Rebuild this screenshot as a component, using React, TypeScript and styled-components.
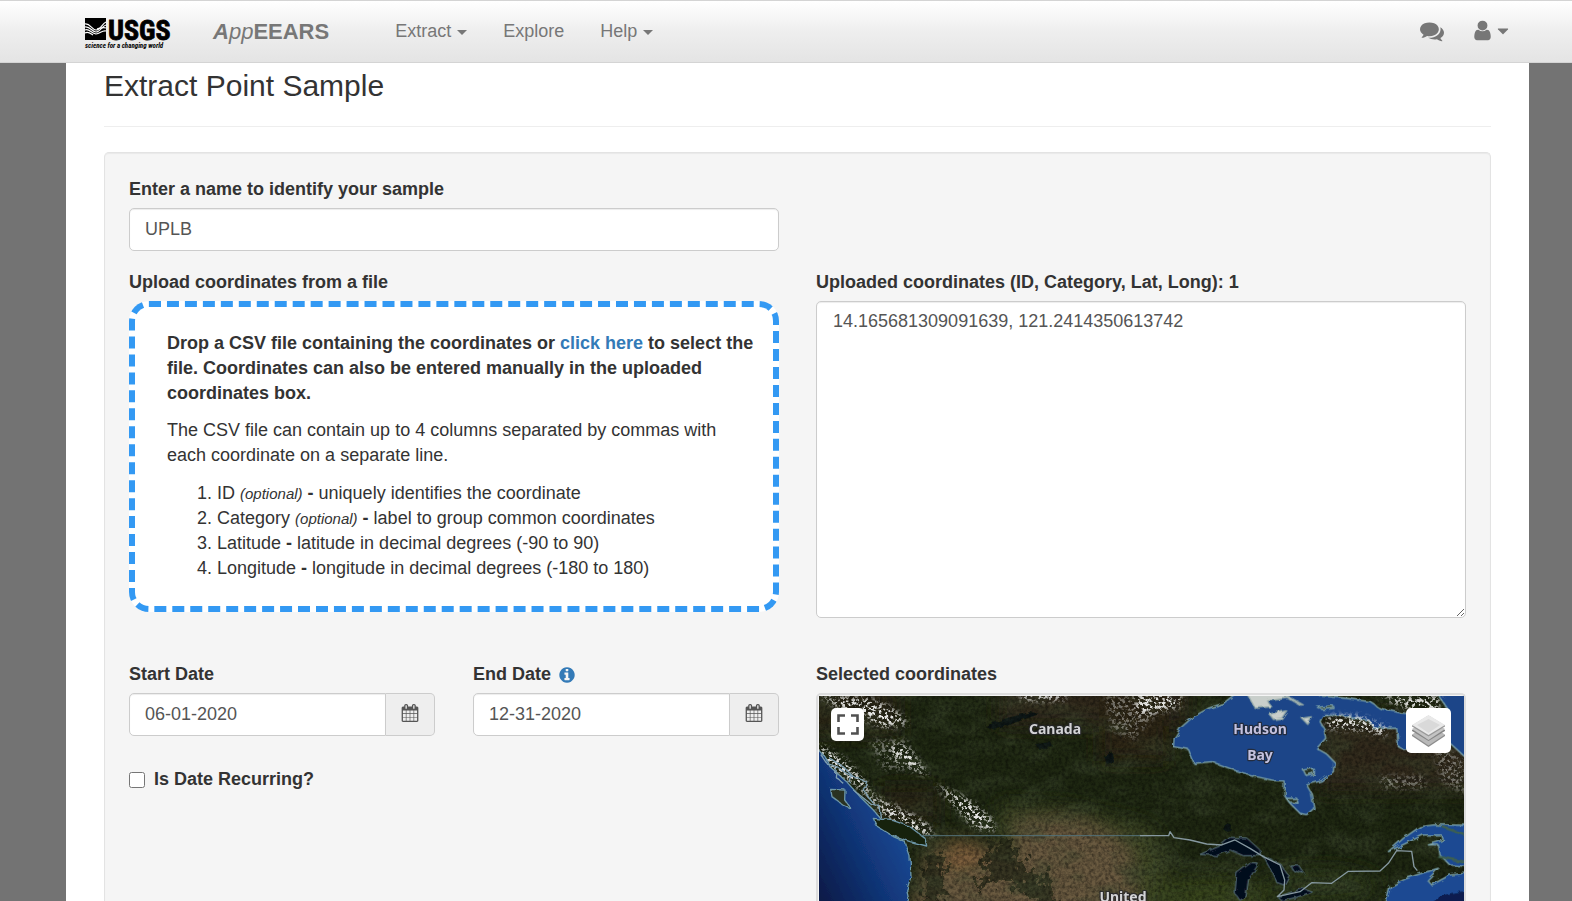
import React from "react";
import styled, { createGlobalStyle, css } from "styled-components";

const GlobalStyle = createGlobalStyle`
  *, *::before, *::after { box-sizing: border-box; }
  html { background: #737373; }
  body {
    margin: 0;
    color: #333;
    font-family: "Liberation Sans", Arial, Helvetica, sans-serif;
    font-size: 18px;
    line-height: 25px;
  }
  #root { min-height: 100vh; display: flex; flex-direction: column; }
`;

/* ---------- navigation ---------- */

const Navbar = styled.header`
  display: flex;
  align-items: center;
  height: 63px;
  padding: 0 60px 0 85px;
  border-top: 1px solid #d4d4d4;
  border-bottom: 1px solid #d4d4d4;
  background: linear-gradient(#fff, #eee 50%, #e4e4e4);
  color: #777;
`;

const LogoLink = styled.a`
  display: block;
  height: 34px;
  margin-top: 4px;
`;

const Brand = styled.a`
  margin-left: 43px;
  color: #777;
  font-size: 22px;
  font-weight: bold;
  text-decoration: none;
`;

const BrandLight = styled.em`
  font-weight: normal;
`;

const Menu = styled.nav`
  margin: 0 auto 0 66px;
`;

const NavList = styled.ul`
  display: flex;
  gap: 36px;
  margin: 0;
  padding: 0;
  list-style: none;
`;

const plainControl = css`
  display: inline-flex;
  align-items: center;
  padding: 0;
  border: 0;
  background: none;
  color: #777;
  font: inherit;
  text-decoration: none;
  cursor: pointer;
`;

const NavLink = styled.a`
  ${plainControl}
`;

const NavButton = styled.button`
  ${plainControl}
`;

const Caret = styled.span`
  margin: 2px 0 0 6px;
  border: 5px solid transparent;
  border-top-color: currentColor;
  border-bottom: 0;
`;

const NavTools = styled.div`
  display: flex;
  gap: 27px;
  padding-bottom: 2px;
`;

const Icon = styled.svg<{ $size: number }>`
  display: block;
  flex: none;
  width: ${(p) => p.$size}px;
  height: ${(p) => p.$size}px;
  fill: currentColor;
`;

/* ---------- page ---------- */

const Sheet = styled.main`
  display: flex;
  flex: 1;
  flex-direction: column;
  margin: 0 43px 0 66px;
  padding: 6px 38px 0;
  background: #fff;
`;

const Title = styled.h1`
  margin: 0 0 25px;
  padding-bottom: 24px;
  border-bottom: 1px solid #eee;
  font-size: 30px;
  font-weight: normal;
  line-height: 33px;
`;

const Well = styled.form`
  display: flex;
  flex: 1;
  flex-direction: column;
  padding: 24px 24px 0;
  border: 1px solid #e3e3e3;
  border-bottom: 0;
  border-radius: 5px 5px 0 0;
  background: #f5f5f5;
  box-shadow: inset 0 1px 1px rgba(0, 0, 0, 0.05);
`;

const Columns = styled.div<{ $gapBelow?: number; $fill?: boolean }>`
  display: grid;
  grid-template-columns: minmax(0, 1fr) minmax(0, 1fr);
  gap: 37px;
  margin-bottom: ${(p) => p.$gapBelow ?? 0}px;
  ${(p) => p.$fill && "flex: 1;"}
`;

const Field = styled.div`
  display: flex;
  flex-direction: column;
`;

const labelText = css`
  display: flex;
  align-items: center;
  margin-bottom: 6px;
  font-weight: bold;
`;

const Label = styled.label`
  ${labelText}
`;

const Caption = styled.div`
  ${labelText}
`;

const inputFrame = css`
  width: 100%;
  border: 1px solid #ccc;
  border-radius: 5px;
  background: #fff;
  box-shadow: inset 0 1px 1px rgba(0, 0, 0, 0.075);
  color: #555;
  font: inherit;
`;

const TextInput = styled.input`
  ${inputFrame}
  height: 43px;
  padding: 0 15px;
`;

const TextArea = styled.textarea`
  ${inputFrame}
  display: block;
  height: 317px;
  padding: 7px 16px;
  resize: vertical;
`;

const DropZone = styled.section`
  min-height: 311px;
  padding: 24px 17px 23px 32px;
  border: 6px dashed #3399f3;
  border-radius: 20px;
  background: #fff;
`;

const Paragraph = styled.p<{ $strong?: boolean }>`
  margin: 0 0 12px;
  font-weight: ${(p) => (p.$strong ? "bold" : "normal")};
`;

const Anchor = styled.a`
  color: #337ab7;
  text-decoration: none;
`;

const ColumnList = styled.ol`
  margin: 13px 0 0;
  padding-left: 50px;
`;

const Optional = styled.em`
  font-size: 15px;
`;

const DateSide = styled.div`
  display: flex;
  flex-direction: column;
  gap: 31px;
`;

const DateRow = styled.div`
  display: grid;
  grid-template-columns: 1fr 1fr;
  gap: 38px;
`;

const DateGroup = styled.div`
  display: flex;

  ${TextInput} {
    flex: 1;
    min-width: 0;
    border-radius: 5px 0 0 5px;
  }
`;

const CalendarButton = styled.button`
  display: grid;
  place-items: center;
  width: 49px;
  padding: 0 0 4px;
  border: 1px solid #ccc;
  border-left: 0;
  border-radius: 0 5px 5px 0;
  background: #eee;
  color: #555;
  cursor: pointer;
`;

const InfoButton = styled.button`
  ${plainControl}
  margin-left: 7px;
  color: #337ab7;
`;

const CheckLabel = styled.label`
  display: flex;
  align-items: center;
  gap: 9px;
  font-weight: bold;
`;

const CheckBox = styled.input`
  width: 16px;
  height: 16px;
  margin: 1px 0 0;
`;

/* ---------- map ---------- */

const MapFrame = styled.div`
  position: relative;
  flex: 1;
  min-height: 200px;
  border: 2px solid #ddd;
  border-bottom: 0;
  border-radius: 5px 5px 0 0;
`;

const MapCanvas = styled.svg`
  position: absolute;
  inset: 1px 0 0 1px;
  width: calc(100% - 1px);
  height: calc(100% - 1px);
`;

const MapControl = styled.button<{ $size: number; $side: "left" | "right" }>`
  position: absolute;
  top: 13px;
  ${(p) => p.$side}: 13px;
  display: grid;
  place-items: center;
  width: ${(p) => p.$size}px;
  height: ${(p) => p.$size}px;
  padding: 0;
  border: 0;
  border-radius: 5px;
  background: #fff;
  cursor: pointer;
`;

const paths = {
  comments:
    "M1408 768q0 139-94 257t-256.5 186.5-353.5 68.5q-86 0-176-16-124 88-278 128-36 9-86 16h-3q-11 0-20.5-8t-11.5-21q-1-3-1-6.5t.5-6.5 2-6l2.5-5 3.5-5.5 4-5 4.5-5 4-4.5q5-6 23-25t26-29.5 22.5-29 25-38.5 20.5-44q-124-72-195-177t-71-224q0-139 94-257t256.5-186.5 353.5-68.5 353.5 68.5 256.5 186.5 94 257zm384 256q0 120-71 224.5t-195 176.5q10 24 20.5 44t25 38.5 22.5 29 26 29.5 23 25q1 1 4 4.5t4.5 5 4 5 3.5 5.5l2.5 5 2 6 .5 6.5-1 6.5q-3 14-13 22t-22 7q-50-7-86-16-154-40-278-128-90 16-176 16-271 0-472-132 58 4 88 4 161 0 309-45t264-129q125-92 192-212t67-254q0-77-23-152 129 71 204 178t75 230z",
  user:
    "M1536 1399q0 109-62.5 187t-150.5 78h-854q-88 0-150.5-78t-62.5-187q0-85 8.5-160.5t31.5-152 58.5-131 94-89 134.5-34.5q131 128 313 128t313-128q76 0 134.5 34.5t94 89 58.5 131 31.5 152 8.5 160.5zm-256-887q0 159-112.5 271.5t-271.5 112.5-271.5-112.5-112.5-271.5 112.5-271.5 271.5-112.5 271.5 112.5 112.5 271.5z",
  caret:
    "M1408 704q0 26-19 45l-448 448q-19 19-45 19t-45-19l-448-448q-19-19-19-45t19-45 45-19h896q26 0 45 19t19 45z",
  calendar:
    "M192 1664h288v-288h-288v288zm352 0h320v-288h-320v288zm-352-352h288v-320h-288v320zm352 0h320v-320h-320v320zm-352-384h288v-288h-288v288zm736 736h320v-288h-320v288zm-384-736h320v-288h-320v288zm768 736h288v-288h-288v288zm-384-352h320v-320h-320v320zm-352-864v-288q0-13-9.5-22.5t-22.5-9.5h-64q-13 0-22.5 9.5t-9.5 22.5v288q0 13 9.5 22.5t22.5 9.5h64q13 0 22.5-9.5t9.5-22.5zm736 864h288v-320h-288v320zm-384-384h320v-288h-320v288zm384 0h288v-288h-288v288zm32-480v-288q0-13-9.5-22.5t-22.5-9.5h-64q-13 0-22.5 9.5t-9.5 22.5v288q0 13 9.5 22.5t22.5 9.5h64q13 0 22.5-9.5t9.5-22.5zm384-64v1280q0 52-38 90t-90 38h-1408q-52 0-90-38t-38-90v-1280q0-52 38-90t90-38h128v-96q0-66 47-113t113-47h64q66 0 113 47t47 113v96h384v-96q0-66 47-113t113-47h64q66 0 113 47t47 113v96h128q52 0 90 38t38 90z",
  info:
    "M1152 1376v-160q0-14-9-23t-23-9h-96v-512q0-14-9-23t-23-9h-320q-14 0-23 9t-9 23v160q0 14 9 23t23 9h96v320h-96q-14 0-23 9t-9 23v160q0 14 9 23t23 9h448q14 0 23-9t9-23zm-128-896v-160q0-14-9-23t-23-9h-192q-14 0-23 9t-9 23v160q0 14 9 23t23 9h192q14 0 23-9t9-23zm640 416q0 209-103 385.5t-279.5 279.5-385.5 103-385.5-103-279.5-279.5-103-385.5 103-385.5 279.5-279.5 385.5-103 385.5 103 279.5 279.5 103 385.5z",
};

function Glyph({ name, size }: { name: keyof typeof paths; size: number }) {
  return (
    <Icon $size={size} viewBox="0 0 1792 1792" aria-hidden="true">
      <path d={paths[name]} />
    </Icon>
  );
}

function UsgsLogo() {
  return (
    <svg width="85" height="34" viewBox="0 0 85 34" overflow="visible" role="img" aria-label="USGS">
      <rect x="0" y="1" width="21" height="22" />
      <g fill="none" stroke="#fff" strokeWidth="1.2">
        <path d="M0 7c5-1 7 6 11 6s6-6 10-8" />
        <path d="M0 10c5-1 7 5 11 5s6-6 10-7" />
        <path d="M12 12c4-1 6-2 9-1" />
        <path d="M0 13c4-2 6 3 11 4 4 0 6-4 10-3" />
        <path d="M0 16c3-2 5 0 8 2" />
      </g>
      <text
        x="23"
        y="23"
        fontFamily="'Roboto Condensed', 'Open Sans Condensed', 'Liberation Sans', sans-serif"
        fontWeight="bold"
        fontSize="28"
        stroke="#000"
        strokeWidth="0.8"
      >
        USGS
      </text>
      <text
        x="0"
        y="31"
        fontFamily="'Roboto Condensed', 'Open Sans Condensed', 'Liberation Sans', sans-serif"
        fontWeight="bold"
        fontStyle="italic"
        fontSize="7"
      >
        science for a changing world
      </text>
    </svg>
  );
}

/* West and east tiles share one 645-unit-wide view; each is drawn at three units per pixel. */
const WEST = "translate(-9 -106) scale(.33333)";
const EAST = "translate(321 -106) scale(.33333)";

const HUDSON =
  "M300 300L250 340 205 355 160 380 120 415 102 445 100 470 145 478 162 520 215 515 290 543 350 560 405 572 432 573 432 615 450 640 480 670 500 674 522 655 514 610 500 585 545 572 580 545 582 515 560 492 530 475 557 445 552 415 540 395 548 378 600 375 690 395 700 415 770 415 775 470 790 478 925 455 990 515 990 300 885 300 925 360 880 380 780 368 720 355 690 335 620 325 540 318 530 300Z";

function SatelliteMap() {
  return (
    <MapCanvas viewBox="0 0 645 205" preserveAspectRatio="xMidYMin slice" role="img" aria-label="Satellite map of North America">
      <defs>
        <filter id="grain" x="0" y="0" width="100%" height="100%">
          <feTurbulence type="fractalNoise" baseFrequency="0.3" numOctaves="4" seed="4" />
          <feColorMatrix values="0 0 0 0 0  0 0 0 0 0  0 0 0 0 0  1.8 1.2 0 0 -1.15" />
        </filter>
        <filter id="mottle" x="0" y="0" width="100%" height="100%">
          <feTurbulence type="fractalNoise" baseFrequency="0.03 0.05" numOctaves="5" seed="11" />
          <feColorMatrix values="0 0 0 0 .05  0 0 0 0 .07  0 0 0 0 .03  3 0 0 0 -1.3" />
        </filter>
        <filter id="snow" x="-10%" y="-10%" width="120%" height="120%">
          <feGaussianBlur in="SourceAlpha" stdDeviation="3" result="area" />
          <feTurbulence type="fractalNoise" baseFrequency="0.3" numOctaves="3" seed="7" />
          <feColorMatrix values="0 0 0 0 .8  0 0 0 0 .8  0 0 0 0 .78  7 0 0 0 -3.4" />
          <feComposite in2="area" operator="in" />
        </filter>
        <filter id="rough" x="-5%" y="-5%" width="110%" height="110%">
          <feTurbulence type="fractalNoise" baseFrequency="0.14" numOctaves="2" seed="3" />
          <feDisplacementMap in="SourceGraphic" scale="5" />
        </filter>
        <filter id="ragged" x="-10%" y="-10%" width="120%" height="120%">
          <feTurbulence type="fractalNoise" baseFrequency="0.12" numOctaves="4" seed="9" />
          <feDisplacementMap in="SourceGraphic" scale="38" xChannelSelector="R" yChannelSelector="G" />
        </filter>
        <filter id="soft" x="-40%" y="-40%" width="180%" height="180%">
          <feGaussianBlur stdDeviation="9" />
        </filter>
        <linearGradient id="pacific" x1="1" y1="0.2" x2="0" y2="1">
          <stop offset="0" stopColor="#1d56a6" />
          <stop offset="0.5" stopColor="#113577" />
          <stop offset="1" stopColor="#08143c" />
        </linearGradient>
      </defs>

      <rect width="645" height="205" fill="#1f2812" />
      <g filter="url(#soft)">
        <rect x="-20" y="-20" width="100" height="60" fill="#2b2719" />
        <rect x="180" y="-20" width="190" height="50" fill="#33291b" />
        <rect x="280" y="-10" width="70" height="75" fill="#2e2619" />
        <rect x="500" y="20" width="170" height="75" fill="#30291a" />
        <rect x="60" y="90" width="60" height="36" fill="#2c2618" />
        <path d="M180 108L250 112 330 130 350 160 345 220 190 220 180 140Z" fill="#414a25" />
        <path d="M195 125L260 122 310 150 318 220 90 220 110 150 150 145 200 160Z" fill="#6b5a40" />
        <ellipse cx="142" cy="160" rx="24" ry="16" fill="#80603c" />
        <ellipse cx="390" cy="205" rx="60" ry="26" fill="#37451f" />
        <ellipse cx="500" cy="190" rx="60" ry="18" fill="#2e3b1c" />
      </g>
      <g filter="url(#ragged)" fill="#232512" opacity=".7">
        <path d="M108 158L126 160 122 225 104 225Z" />
        <path d="M170 145L196 148 206 180 224 176 240 215 222 218 200 192 176 184 152 192 166 176Z" />
      </g>
      <g filter="url(#rough)" fill="#0e1913">
        <path d="M166 30l22-8 24-6 8 2-22 8-22 8zM216 48l16-2 2 5-14 2zM285 60l8-4 2 10-6 4z" />
        <circle cx="409" cy="132" r="4" />
      </g>
      <rect width="645" height="205" filter="url(#mottle)" opacity=".45" />
      <rect width="645" height="205" filter="url(#grain)" opacity=".4" />

      <g filter="url(#snow)">
        <path d="M0 0L50 2 76 14 90 28 66 32 44 22 20 12Z" />
        <path d="M70 48L90 52 110 80 98 76 76 62Z" />
        <path d="M0 48L24 62 44 82 54 100 80 112 106 126 116 140 100 138 66 120 40 92 14 74 0 62Z" />
        <path d="M116 88L150 104 172 122 176 136 154 130 134 108Z" />
        <path d="M202 -4h44v8h-44z" />
        <path d="M318 -2h44v12l-30 8h-14z" />
      </g>
      <g filter="url(#snow)" opacity=".4">
        <path d="M285 0h50v20l-20 24-22-10z" />
        <path d="M560 80h46v12h-42zM614 52l33 10v36l-24-12z" />
        <path d="M50 44h40v30h-26z" />
      </g>

      <g filter="url(#rough)" strokeLinejoin="round">
        <g transform={WEST} stroke="#6d97a8" strokeWidth="4">
          <path d="M10 465L45 500 60 530 110 575 150 620 190 660 215 690 250 740 285 755 300 800 303 860 290 900 305 970 0 970Z" fill="url(#pacific)" />
          <path d="M190 685L250 692 300 710 345 745 350 768 300 755 240 733 200 708Z" fill="#18200f" />
          <path d="M62 598L105 600 104 630 122 655 95 642 66 620Z" fill="#2b3322" />
          <path d="M30 490L50 520 80 530 76 560 100 580M60 505L100 530 130 560 170 575 160 600 190 640M80 530L125 560 120 580M130 600L180 640 210 650 215 690" fill="none" stroke="#7f9fb0" />
        </g>
        <g transform={EAST} stroke="#7fa5ac" strokeWidth="4">
          <path d={HUDSON} fill="#1b4588" />
          <path d="M388 372L440 362 425 385 400 388ZM486 385L514 380 500 400ZM320 310L345 355 395 350 380 330 440 322 480 345 490 345 430 310Z" fill="#c9cfcb" stroke="#8fa5a4" />
          <path d="M532 352L580 347 582 355 545 358ZM490 540L520 535 520 550 498 556ZM440 625L470 625 474 640 448 636Z" fill="#273020" />
          <path d="M180 793L240 768 270 742 320 744 360 780 362 797 310 797 270 780 230 797ZM290 850L330 820 355 822 325 870 318 920 300 931 285 910ZM370 800L420 820 440 850 450 860 435 888 412 880 395 845ZM450 825L475 825 492 850 460 842ZM412 920L490 895 518 905 470 922 425 932Z" fill="#060b1c" stroke="#5f7c88" strokeWidth="3" />
          <path d="M745 785L790 745 840 710 885 704 990 706V830L930 825 900 795 895 765 865 765 910 750 905 735 850 735Z" fill="#1b4a92" />
          <path d="M735 950L750 890 800 865 850 848 895 835 862 870 875 885 930 855 990 848V950Z" fill="#1b4a92" />
          <path d="M905 710L975 735M895 800L975 815" fill="none" stroke="#3f6050" strokeWidth="7" />
          <path d="M870 950Q890 905 990 903V950Z" fill="#0a1e50" stroke="none" />
        </g>
      </g>

      <g filter="url(#snow)">
        <path d="M508 20L540 20 570 32 566 40 540 34 508 32Z" />
        <path d="M510 22L544 22 556 32 520 32Z" />
        <path d="M558 0L622 0 618 16 586 12Z" />
      </g>

      <g fill="none" stroke="#8698a0" strokeWidth="4" strokeLinejoin="round">
        <path transform={WEST} d="M330 737H1022" stroke="#54717a" strokeWidth="3" />
        <path transform={EAST} d="M0 737H86L90 725 102 743 150 750 200 762 245 765 285 750 330 775 370 800 420 825 434 870 432 900 412 920 480 905 515 878 575 880 625 844 720 843 745 820 770 782 815 784 822 830 832 842" />
      </g>

      <g
        fontFamily="'Noto Sans', 'Open Sans', sans-serif"
        fontSize="14"
        fontWeight="bold"
        textAnchor="middle"
        fill="#d3d3d6"
        stroke="#26262c"
        strokeWidth="2.4"
        strokeOpacity=".8"
        strokeLinejoin="round"
        paintOrder="stroke"
      >
        <text x="236" y="38">Canada</text>
        <text x="441" y="38" fill="#c4c2df">Hudson</text>
        <text x="441" y="64" fill="#c4c2df">Bay</text>
        <text x="304" y="206">United</text>
      </g>
    </MapCanvas>
  );
}

function DateField({ id, label, value, info }: { id: string; label: string; value: string; info?: boolean }) {
  return (
    <Field>
      <Caption>
        <label htmlFor={id}>{label}</label>
        {info && (
          <InfoButton type="button" aria-label="About the end date">
            <Glyph name="info" size={18} />
          </InfoButton>
        )}
      </Caption>
      <DateGroup>
        <TextInput id={id} defaultValue={value} />
        <CalendarButton type="button" aria-label={`Choose ${label}`}>
          <Glyph name="calendar" size={18} />
        </CalendarButton>
      </DateGroup>
    </Field>
  );
}

export default function App() {
  return (
    <>
      <GlobalStyle />
      <Navbar>
        <LogoLink href="#usgs">
          <UsgsLogo />
        </LogoLink>
        <Brand href="#home">
          <em>A</em>
          <BrandLight>pp</BrandLight>EEARS
        </Brand>
        <Menu>
          <NavList>
            <li>
              <NavButton type="button">
                Extract
                <Caret />
              </NavButton>
            </li>
            <li>
              <NavLink href="#explore">Explore</NavLink>
            </li>
            <li>
              <NavButton type="button">
                Help
                <Caret />
              </NavButton>
            </li>
          </NavList>
        </Menu>
        <NavTools>
          <NavButton type="button" aria-label="Feedback">
            <Glyph name="comments" size={24} />
          </NavButton>
          <NavButton type="button" aria-label="Account">
            <Glyph name="user" size={23} />
            <Glyph name="caret" size={18} />
          </NavButton>
        </NavTools>
      </Navbar>

      <Sheet>
        <Title>Extract Point Sample</Title>
        <Well>
          <Columns $gapBelow={19}>
            <Field>
              <Label htmlFor="sample-name">Enter a name to identify your sample</Label>
              <TextInput id="sample-name" defaultValue="UPLB" />
            </Field>
          </Columns>

          <Columns $gapBelow={44}>
            <Field>
              <Caption>Upload coordinates from a file</Caption>
              <DropZone>
                <Paragraph $strong>
                  Drop a CSV file containing the coordinates or <Anchor href="#file">click here</Anchor> to select the
                  file. Coordinates can also be entered manually in the uploaded coordinates box.
                </Paragraph>
                <Paragraph>
                  The CSV file can contain up to 4 columns separated by commas with each coordinate on a separate line.
                </Paragraph>
                <ColumnList>
                  <li>
                    ID <Optional>(optional)</Optional> <b>-</b> uniquely identifies the coordinate
                  </li>
                  <li>
                    Category <Optional>(optional)</Optional> <b>-</b> label to group common coordinates
                  </li>
                  <li>
                    Latitude <b>-</b> latitude in decimal degrees (-90 to 90)
                  </li>
                  <li>
                    Longitude <b>-</b> longitude in decimal degrees (-180 to 180)
                  </li>
                </ColumnList>
              </DropZone>
            </Field>
            <Field>
              <Label htmlFor="coordinates">Uploaded coordinates (ID, Category, Lat, Long): 1</Label>
              <TextArea id="coordinates" defaultValue="14.165681309091639, 121.2414350613742" />
            </Field>
          </Columns>

          <Columns $fill>
            <DateSide>
              <DateRow>
                <DateField id="start-date" label="Start Date" value="06-01-2020" />
                <DateField id="end-date" label="End Date" value="12-31-2020" info />
              </DateRow>
              <CheckLabel>
                <CheckBox type="checkbox" />
                Is Date Recurring?
              </CheckLabel>
            </DateSide>
            <Field>
              <Caption>Selected coordinates</Caption>
              <MapFrame>
                <SatelliteMap />
                <MapControl type="button" $size={33} $side="left" aria-label="Full screen">
                  <svg width="22" height="21" viewBox="0 0 22 21" fill="none" stroke="#505050" strokeWidth="2.6">
                    <path d="M1.500 8V1.500H8M14 1.500h6.500V8M20.500 13v6.500H14M8 19.500H1.500V13" />
                  </svg>
                </MapControl>
                <MapControl type="button" $size={45} $side="right" aria-label="Layers">
                  <svg width="33" height="33" viewBox="0 0 33 33">
                    <path d="M0 21l16.500-10L33 21v1L16.500 33 0 22z" fill="#8c8c8c" />
                    <path d="M0 20.500l16.500-10 16.500 10-16.500 11z" fill="#b9b9b9" />
                    <path d="M0 16l16.500-10L33 16v1L16.500 27 0 17z" fill="#858585" />
                    <path d="M0 15l16.500-10 16.500 10-16.500 11z" fill="#c4c4c4" />
                    <path d="M0 11.500l16.500-10 16.500 10v1L16.500 22.500 0 12.500z" fill="#999" />
                    <path d="M0 11L16.500 1 33 11 16.500 21z" fill="#e9e9e9" />
                    <path d="M5 11l11.500-6 11.500 6-11.500 8z" fill="#d9d9d9" />
                  </svg>
                </MapControl>
              </MapFrame>
            </Field>
          </Columns>
        </Well>
      </Sheet>
    </>
  );
}
